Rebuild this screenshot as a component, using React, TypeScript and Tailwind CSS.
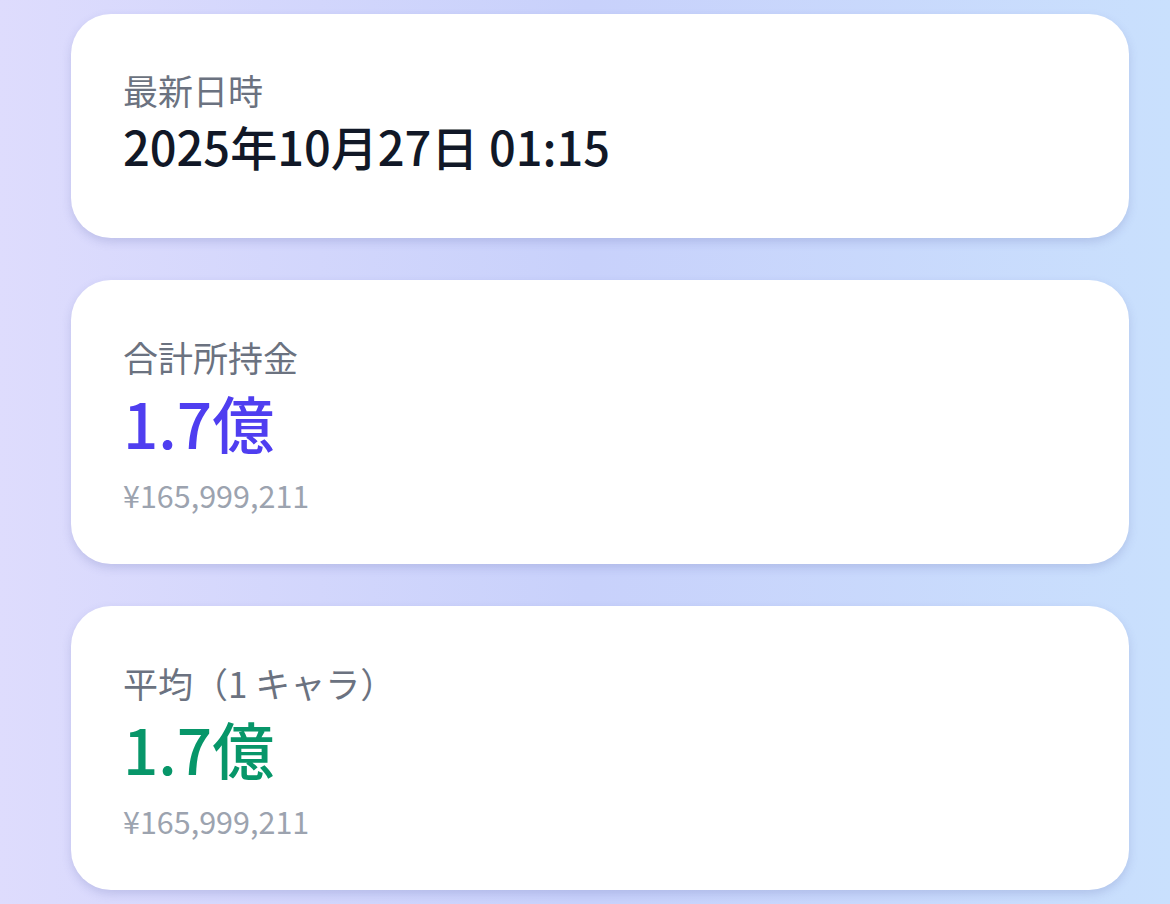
import React from "react";

const font = { fontFamily: '"Noto Sans CJK JP", "Noto Sans", sans-serif' };

function Card({ children, className = "" }: { children: React.ReactNode; className?: string }) {
  return (
    <div
      className={`bg-white rounded-[40px] px-[52px] shadow-[0_4px_10px_rgba(90,100,170,0.22)] ${className}`}
    >
      {children}
    </div>
  );
}

function MoneyCard({ label, value, sub, color }: { label: string; value: string; sub: string; color: string }) {
  return (
    <Card className="h-[284px] flex flex-col pt-[54px]">
      <div className="text-[35px] leading-[46px] text-[#6b7280]">{label}</div>
      <div className={`text-[62px] leading-[80px] font-medium mt-[2px] ${color}`}>{value}</div>
      <div className="text-[30.5px] leading-[48px] text-[#9ca3af] mt-[9px]">{sub}</div>
    </Card>
  );
}

export default function App() {
  return (
    <div
      style={font}
      className="w-[1170px] h-[904px] overflow-hidden bg-gradient-to-r from-[#dedcfd] via-[#c8d1fb] to-[#c9e0fd] pl-[71px] pr-[41px] pt-[14px] flex flex-col gap-[42px]"
    >
      <Card className="h-[224px] flex flex-col pt-[52px]">
        <div className="text-[35px] leading-[48px] text-[#6b7280]">最新日時</div>
        <div className="text-[47px] leading-[64px] font-medium text-[#111827]">2025年10月27日 01:15</div>
      </Card>
      <MoneyCard label="合計所持金" value="1.7億" sub="¥165,999,211" color="text-[#4f3ef0]" />
      <MoneyCard label="平均（1 キャラ）" value="1.7億" sub="¥165,999,211" color="text-[#079669]" />
    </div>
  );
}
